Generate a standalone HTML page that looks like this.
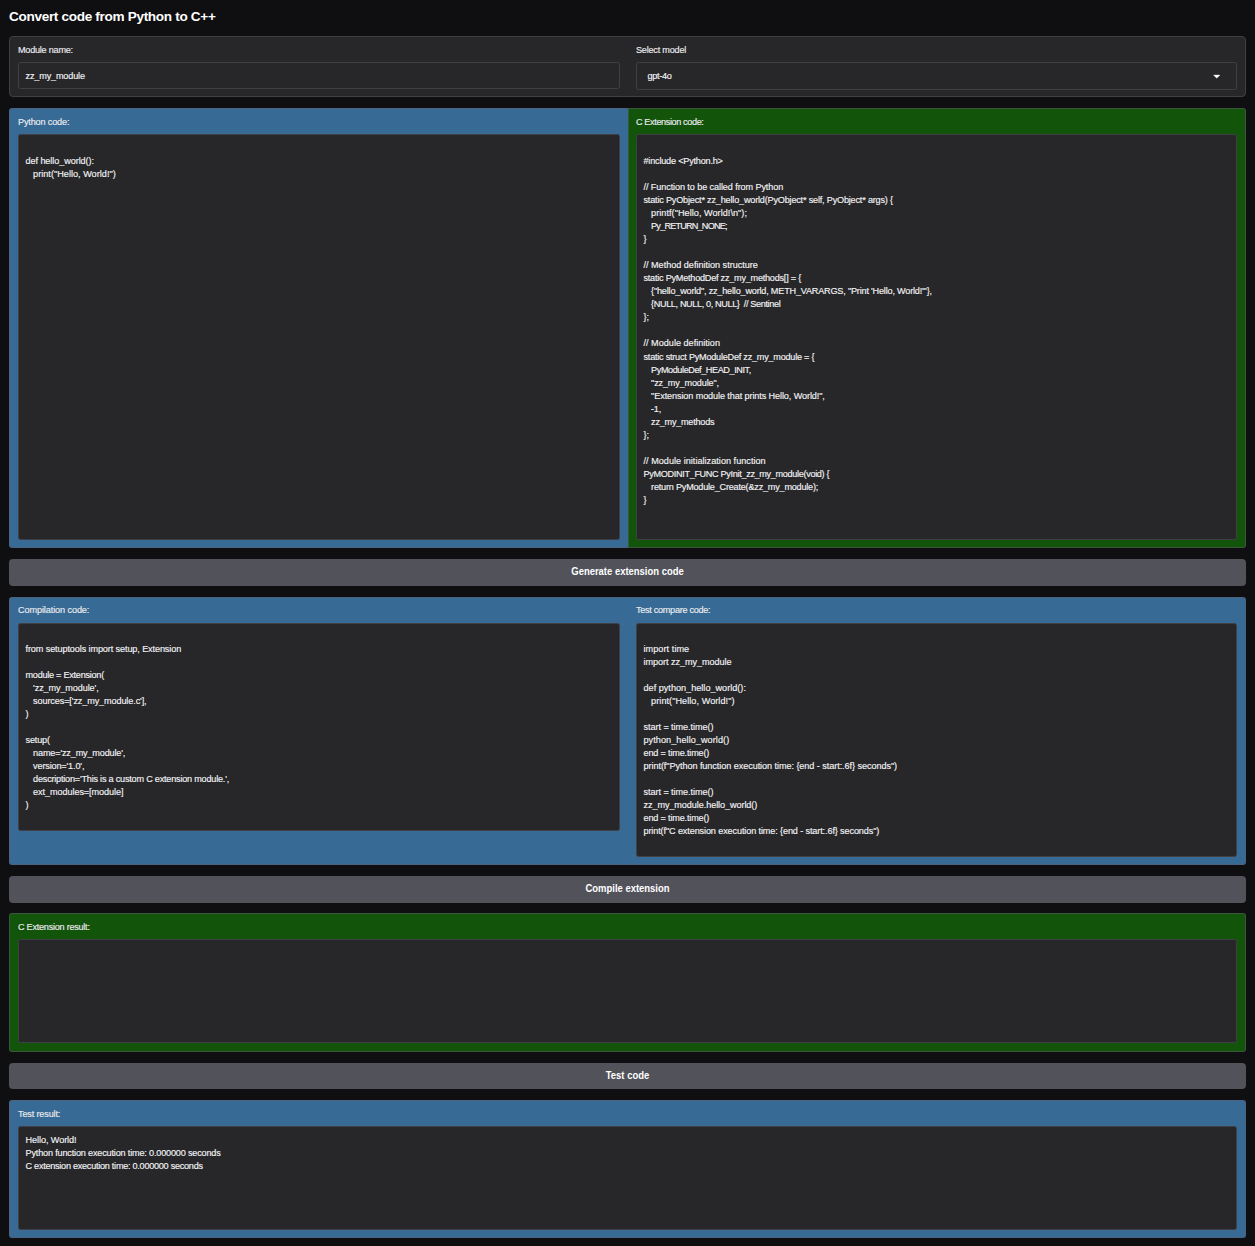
<!DOCTYPE html>
<html><head><meta charset="utf-8"><title>Convert code from Python to C++</title>
<style>
html,body{margin:0;padding:0;}
body{width:1255px;height:1246px;background:#0f0f11;position:relative;overflow:hidden;font-family:"Liberation Sans",sans-serif;}
body>div{position:absolute;box-sizing:content-box;}
.lab,.inp,.title,.btn{white-space:pre;line-height:13px;}
.lab{-webkit-text-stroke:0.15px #ececef;letter-spacing:-0.15px;font-size:9.1px;color:#ececef;}
.inp{-webkit-text-stroke:0.15px #f4f4f5;letter-spacing:-0.15px;font-size:9.1px;color:#f4f4f5;}
.title{font-size:13.6px;letter-spacing:-0.33px;line-height:20px;font-weight:bold;color:#ffffff;}
.btn{width:1255px;text-align:center;font-size:10.5px;transform:scaleX(0.9);transform-origin:627.5px 0;font-weight:bold;color:#ffffff;}
.code{-webkit-text-stroke:0.15px #f4f4f5;letter-spacing:-0.15px;font-size:9.1px;line-height:13.03px;color:#f4f4f5;white-space:pre;}
</style></head>
<body>
<div class="title" style="left:9px;top:6.800000000000001px;">Convert code from Python to C++</div>
<div style="left:9px;top:36px;width:1235px;height:59px;background:#27272a;border:1px solid #3f3f46;border-radius:4px;"></div>
<div class="lab" style="left:18px;top:44.1px;letter-spacing:-0.230px;">Module name:</div>
<div class="lab" style="left:636px;top:44.1px;letter-spacing:-0.210px;">Select model</div>
<div style="left:18px;top:62px;width:600px;height:25px;background:#27272a;border:1px solid #3f3f46;border-radius:2.5px;"></div>
<div style="left:636px;top:62px;width:599px;height:26px;background:#27272a;border:1px solid #3f3f46;border-radius:2.5px;"></div>
<div class="inp" style="left:25.5px;top:70.1px;">zz_my_module</div>
<div class="inp" style="left:647.5px;top:70.3px;letter-spacing:-0.310px;">gpt-4o</div>
<svg style="position:absolute;left:1212px;top:74px" width="10" height="6" viewBox="0 0 10 6"><path d="M1.5 1.0 L8.0 1.0 L4.75 4.3 Z" fill="#fff" stroke="#fff" stroke-width="0.3" stroke-linejoin="round"/></svg>
<div style="left:9px;top:108px;width:618px;height:438px;background:#376a94;border:1px solid rgba(95,90,110,0.5);border-radius:3px 0 0 3px;border-right:none;"></div>
<div style="left:628px;top:108px;width:616px;height:438px;background:#12540a;border:1px solid rgba(95,90,110,0.5);border-radius:0 3px 3px 0;"></div>
<div class="lab" style="left:18px;top:116px;">Python code:</div>
<div class="lab" style="left:636px;top:116px;letter-spacing:-0.370px;">C Extension code:</div>
<div style="left:18px;top:134px;width:600px;height:404px;background:#27272a;border:1px solid #3f3f46;border-radius:2.5px;"></div>
<div style="left:636px;top:134px;width:599px;height:404px;background:#27272a;border:1px solid #3f3f46;border-radius:2.5px;"></div>
<div class="code" style="left:25.5px;top:142.0px"><div>&nbsp;</div><div style="letter-spacing:-0.073px;">def hello_world():</div><div style="padding-left:7.6px;letter-spacing:0.026px;">print(&quot;Hello, World!&quot;)</div></div>
<div class="code" style="left:643.5px;top:142.0px"><div>&nbsp;</div><div style="letter-spacing:-0.194px;">#include &lt;Python.h&gt;</div><div>&nbsp;</div><div style="letter-spacing:-0.093px;">// Function to be called from Python</div><div style="letter-spacing:-0.183px;">static PyObject* zz_hello_world(PyObject* self, PyObject* args) {</div><div style="padding-left:7.6px;letter-spacing:0.046px;">printf(&quot;Hello, World!\n&quot;);</div><div style="padding-left:7.6px;letter-spacing:-0.786px;">Py_RETURN_NONE;</div><div>}</div><div>&nbsp;</div><div style="letter-spacing:-0.012px;">// Method definition structure</div><div style="letter-spacing:-0.226px;">static PyMethodDef zz_my_methods[] = {</div><div style="padding-left:7.6px;letter-spacing:-0.187px;">{&quot;hello_world&quot;, zz_hello_world, METH_VARARGS, &quot;Print &#x27;Hello, World!&#x27;&quot;},</div><div style="padding-left:7.6px;letter-spacing:-0.362px;">{NULL, NULL, 0, NULL}  // Sentinel</div><div>};</div><div>&nbsp;</div><div style="letter-spacing:0.008px;">// Module definition</div><div style="letter-spacing:-0.223px;">static struct PyModuleDef zz_my_module = {</div><div style="padding-left:7.6px;letter-spacing:-0.407px;">PyModuleDef_HEAD_INIT,</div><div style="padding-left:7.6px;letter-spacing:-0.157px;">&quot;zz_my_module&quot;,</div><div style="padding-left:7.6px;letter-spacing:-0.100px;">&quot;Extension module that prints Hello, World!&quot;,</div><div style="padding-left:7.6px;letter-spacing:-0.250px;">-1,</div><div style="padding-left:7.6px;letter-spacing:-0.233px;">zz_my_methods</div><div>};</div><div>&nbsp;</div><div style="letter-spacing:0.025px;">// Module initialization function</div><div style="letter-spacing:-0.318px;">PyMODINIT_FUNC PyInit_zz_my_module(void) {</div><div style="padding-left:7.6px;letter-spacing:-0.207px;">return PyModule_Create(&amp;zz_my_module);</div><div>}</div></div>
<div style="left:9px;top:559px;width:1237px;height:27px;background:#52525b;border-radius:4px;"></div>
<div class="btn" style="left:0px;top:565.1px;">Generate extension code</div>
<div style="left:9px;top:597px;width:1235px;height:266px;background:#376a94;border:1px solid rgba(95,90,110,0.5);border-radius:3px;"></div>
<div class="lab" style="left:18px;top:604.1px;letter-spacing:-0.090px;">Compilation code:</div>
<div class="lab" style="left:636px;top:604.1px;letter-spacing:-0.285px;">Test compare code:</div>
<div style="left:18px;top:623px;width:600px;height:206px;background:#27272a;border:1px solid #3f3f46;border-radius:2.5px;"></div>
<div style="left:636px;top:623px;width:599px;height:232px;background:#27272a;border:1px solid #3f3f46;border-radius:2.5px;"></div>
<div class="code" style="left:25.5px;top:629.6px"><div>&nbsp;</div><div style="letter-spacing:-0.105px;">from setuptools import setup, Extension</div><div>&nbsp;</div><div style="letter-spacing:-0.250px;">module = Extension(</div><div style="padding-left:7.6px;letter-spacing:-0.114px;">&#x27;zz_my_module&#x27;,</div><div style="padding-left:7.6px;letter-spacing:-0.111px;">sources=[&#x27;zz_my_module.c&#x27;],</div><div>)</div><div>&nbsp;</div><div>setup(</div><div style="padding-left:7.6px;letter-spacing:-0.155px;">name=&#x27;zz_my_module&#x27;,</div><div style="padding-left:7.6px;">version=&#x27;1.0&#x27;,</div><div style="padding-left:7.6px;letter-spacing:-0.206px;">description=&#x27;This is a custom C extension module.&#x27;,</div><div style="padding-left:7.6px;letter-spacing:-0.071px;">ext_modules=[module]</div><div>)</div></div>
<div class="code" style="left:643.5px;top:629.6px"><div>&nbsp;</div><div style="letter-spacing:0.070px;">import time</div><div style="letter-spacing:-0.044px;">import zz_my_module</div><div>&nbsp;</div><div style="letter-spacing:0.013px;">def python_hello_world():</div><div style="padding-left:7.6px;letter-spacing:0.060px;">print(&quot;Hello, World!&quot;)</div><div>&nbsp;</div><div style="letter-spacing:-0.056px;">start = time.time()</div><div style="letter-spacing:0.066px;">python_hello_world()</div><div style="letter-spacing:-0.163px;">end = time.time()</div><div style="letter-spacing:-0.062px;">print(f&quot;Python function execution time: {end - start:.6f} seconds&quot;)</div><div>&nbsp;</div><div style="letter-spacing:-0.056px;">start = time.time()</div><div style="letter-spacing:-0.078px;">zz_my_module.hello_world()</div><div style="letter-spacing:-0.163px;">end = time.time()</div><div style="letter-spacing:-0.116px;">print(f&quot;C extension execution time: {end - start:.6f} seconds&quot;)</div></div>
<div style="left:9px;top:876px;width:1237px;height:27px;background:#52525b;border-radius:4px;"></div>
<div class="btn" style="left:0px;top:882.1px;">Compile extension</div>
<div style="left:9px;top:913px;width:1235px;height:137px;background:#12540a;border:1px solid rgba(95,90,110,0.5);border-radius:3px;"></div>
<div class="lab" style="left:18px;top:921.1px;letter-spacing:-0.244px;">C Extension result:</div>
<div style="left:18px;top:939px;width:1217px;height:102px;background:#27272a;border:1px solid #3f3f46;border-radius:2.5px;"></div>
<div style="left:9px;top:1063px;width:1237px;height:26px;background:#52525b;border-radius:4px;"></div>
<div class="btn" style="left:0px;top:1069.1px;">Test code</div>
<div style="left:9px;top:1100px;width:1235px;height:136px;background:#376a94;border:1px solid rgba(95,90,110,0.5);border-radius:3px;"></div>
<div class="lab" style="left:18px;top:1108.1px;">Test result:</div>
<div style="left:18px;top:1126px;width:1217px;height:102px;background:#27272a;border:1px solid #3f3f46;border-radius:2.5px;"></div>
<div class="code" style="left:25.5px;top:1133.6px"><div style="letter-spacing:-0.067px;">Hello, World!</div><div style="letter-spacing:-0.169px;">Python function execution time: 0.000000 seconds</div><div style="letter-spacing:-0.257px;">C extension execution time: 0.000000 seconds</div></div>
</body></html>
